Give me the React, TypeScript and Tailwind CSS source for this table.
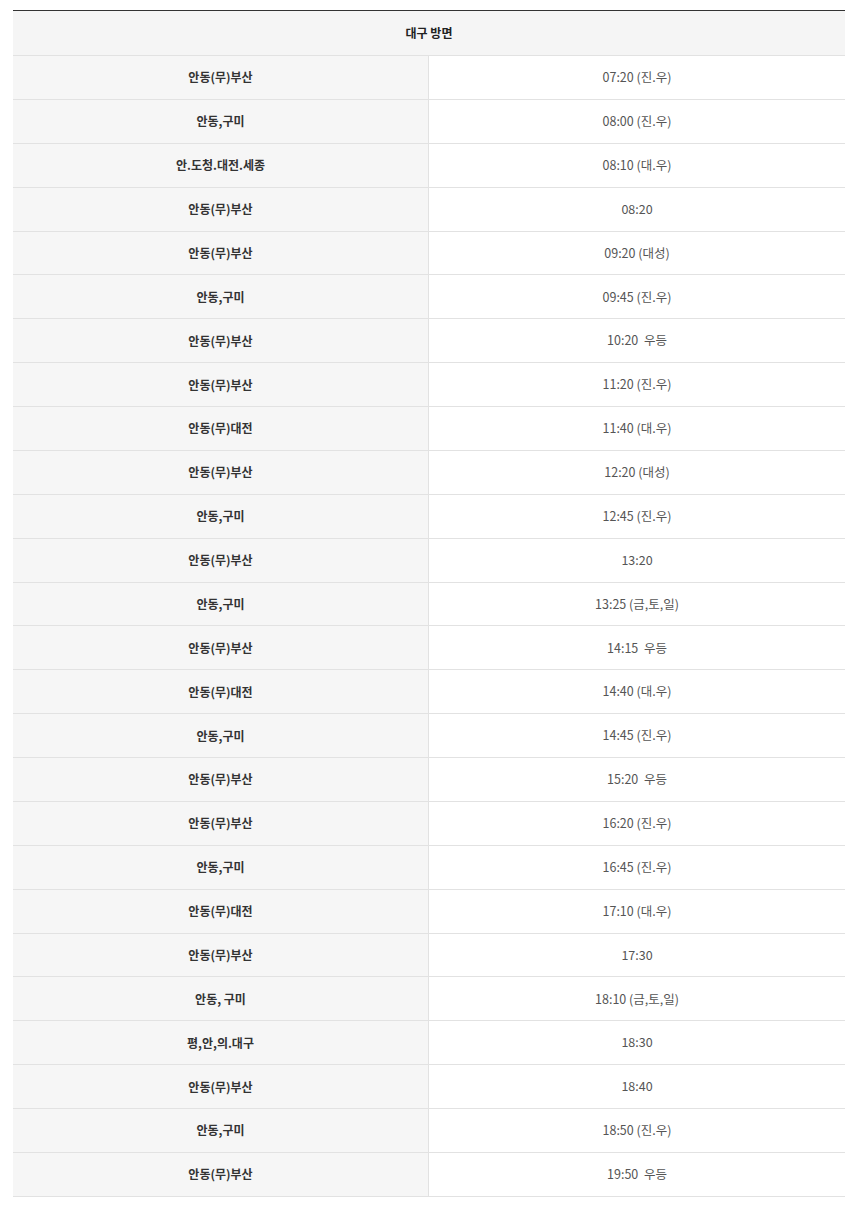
import React from 'react';

const rows: [string, string][] = [
  ['안동(무)부산', '07:20 (진.우)'],
  ['안동,구미', '08:00 (진.우)'],
  ['안.도청.대전.세종', '08:10 (대.우)'],
  ['안동(무)부산', '08:20'],
  ['안동(무)부산', '09:20 (대성)'],
  ['안동,구미', '09:45 (진.우)'],
  ['안동(무)부산', '10:20  우등'],
  ['안동(무)부산', '11:20 (진.우)'],
  ['안동(무)대전', '11:40 (대.우)'],
  ['안동(무)부산', '12:20 (대성)'],
  ['안동,구미', '12:45 (진.우)'],
  ['안동(무)부산', '13:20'],
  ['안동,구미', '13:25 (금,토,일)'],
  ['안동(무)부산', '14:15  우등'],
  ['안동(무)대전', '14:40 (대.우)'],
  ['안동,구미', '14:45 (진.우)'],
  ['안동(무)부산', '15:20  우등'],
  ['안동(무)부산', '16:20 (진.우)'],
  ['안동,구미', '16:45 (진.우)'],
  ['안동(무)대전', '17:10 (대.우)'],
  ['안동(무)부산', '17:30'],
  ['안동, 구미', '18:10 (금,토,일)'],
  ['평,안,의.대구', '18:30'],
  ['안동(무)부산', '18:40'],
  ['안동,구미', '18:50 (진.우)'],
  ['안동(무)부산', '19:50  우등'],
];

export default function App() {
  return (
    <div className="bg-white min-h-[1210px] pt-[10px] pl-[13px] font-['Noto_Sans_CJK_KR','Noto_Sans',sans-serif] text-[12px]">
      <div className="w-[832px] border-t border-[#333]">
        <div className="h-[45px] flex items-center justify-center bg-[#f5f5f5] border-b border-[#e2e2e2] font-bold text-[#222]">
          대구 방면
        </div>
        {rows.map(([route, time], i) => (
          <div key={i} className="flex h-[43.88px] border-b border-[#e2e2e2] leading-none">
            <div className="w-1/2 flex items-center justify-center bg-[#f6f6f6] border-r border-[#e2e2e2] font-bold text-[#333]">
              {route}
            </div>
            <div className="w-1/2 flex items-center justify-center text-[12.5px] text-[#555] whitespace-pre">
              {time}
            </div>
          </div>
        ))}
      </div>
    </div>
  );
}
